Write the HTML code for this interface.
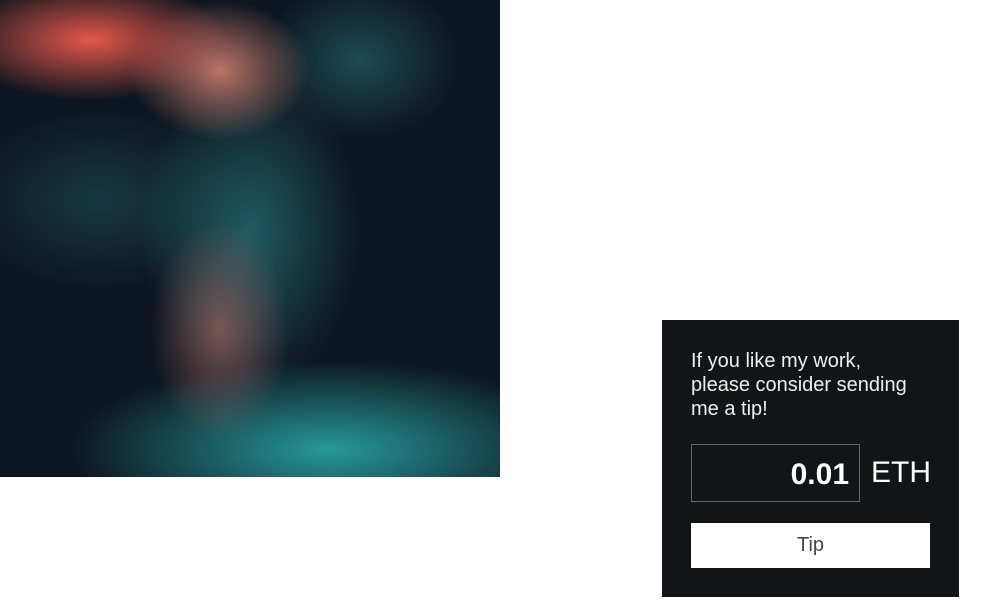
<!DOCTYPE html>
<html><head><style>
body{margin:0;width:982px;height:610px;background:#fff;position:relative;overflow:hidden;font-family:"Liberation Sans",sans-serif}
#img{position:absolute;left:0;top:0;width:500px;height:477px;background:
radial-gradient(ellipse 140px 60px at 90px 40px,rgba(240,90,75,.95),rgba(240,90,75,0) 100%),
radial-gradient(ellipse 90px 70px at 220px 70px,rgba(230,140,120,.8),rgba(230,140,120,0) 100%),
radial-gradient(ellipse 70px 110px at 220px 330px,rgba(200,120,110,.55),rgba(200,120,110,0) 100%),
radial-gradient(ellipse 260px 90px at 330px 450px,rgba(40,160,160,.95),rgba(40,160,160,0) 100%),
radial-gradient(ellipse 110px 160px at 250px 230px,rgba(40,120,125,.7),rgba(40,120,125,0) 100%),
radial-gradient(ellipse 140px 90px at 100px 200px,rgba(30,80,90,.6),rgba(30,80,90,0) 100%),
radial-gradient(ellipse 100px 80px at 360px 60px,rgba(40,110,120,.6),rgba(40,110,120,0) 100%),
#0d1620}
#panel{position:absolute;left:662px;top:320px;width:297px;height:277px;background:#131418;color:#eee}
#t{position:absolute;left:29px;top:29px;font-size:20px;line-height:24px;width:240px;white-space:nowrap}
#in{position:absolute;left:29px;top:124px;width:167px;height:56px;border:1px solid #666;box-sizing:content-box}
#in span{position:absolute;right:10px;top:13px;font-size:30px;font-weight:bold;color:#fff}
#eth{position:absolute;left:209px;top:136px;font-size:30px;color:#fff}
#btn{position:absolute;left:29px;top:203px;width:239px;height:45px;background:#fff;color:#444;font-size:20px;text-align:center;line-height:45px}
</style></head><body>
<div id="img"></div>
<div id="panel">
<div id="t">If you like my work,<br>please consider sending<br>me a tip!</div>
<div id="in"><span>0.01</span></div>
<div id="eth">ETH</div>
<div id="btn">Tip</div>
</div>
</body></html>
